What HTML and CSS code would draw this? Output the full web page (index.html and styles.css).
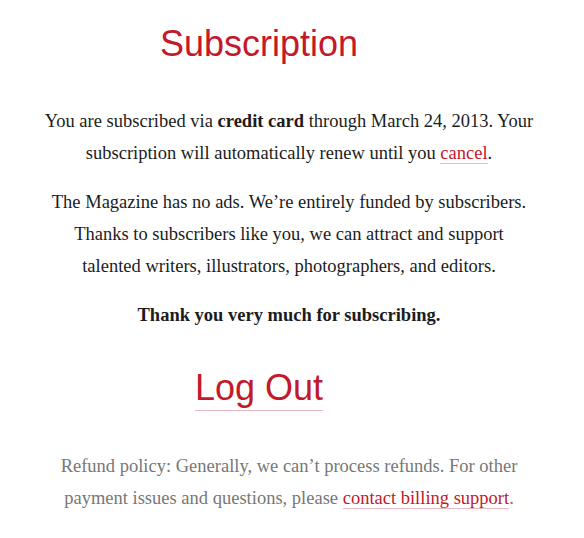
FILE: index.html
```html
<!DOCTYPE html>
<html lang="en">
<head>
<meta charset="utf-8">
<title>Subscription</title>
<link rel="stylesheet" href="styles.css">
</head>
<body>
<main class="page">
  <h1 class="title">Subscription</h1>
  <p class="text">You are subscribed via <strong>credit card</strong> through March 24, 2013. Your subscription will automatically renew until you <a class="link" href="#">cancel</a>.</p>
  <p class="text">The Magazine has no ads. We’re entirely funded by subscribers. Thanks to subscribers like you, we can attract and support talented writers, illustrators, photographers, and editors.</p>
  <p class="text"><strong>Thank you very much for subscribing.</strong></p>
  <div class="logout-wrap"><a class="logout" href="#">Log Out</a></div>
  <p class="text muted">Refund policy: Generally, we can’t process refunds. For other payment issues and questions, please <a class="link" href="#">contact billing support</a>.</p>
</main>
</body>
</html>
```
FILE: styles.css
```css
html, body {
  margin: 0;
  padding: 0;
  background: #ffffff;
}
body {
  font-family: "Liberation Serif", "Times New Roman", serif;
  color: #1c1c1c;
}
.page {
  width: 490px;
  margin: 0 0 0 44px;
  text-align: center;
  padding-top: 22px;
}
.title {
  font-family: "Liberation Sans", Arial, sans-serif;
  font-weight: normal;
  font-size: 36px;
  line-height: 44px;
  color: #c4182b;
  margin: 0 60px 39px 0;
}
.text {
  font-size: 18.5px;
  line-height: 32px;
  margin: 0 0 17px;
}
.text strong {
  font-weight: bold;
}
.link {
  color: #c4182b;
  text-decoration: none;
  border-bottom: 1px solid #eab8be;
}
.logout-wrap {
  margin: 35px 60px 40px 0;
}
.logout {
  font-family: "Liberation Sans", Arial, sans-serif;
  font-size: 36px;
  line-height: 44px;
  padding-bottom: 2px;
  color: #c4182b;
  text-decoration: none;
  border-bottom: 1px solid #eab8be;
}
.muted {
  color: #777777;
}
```
